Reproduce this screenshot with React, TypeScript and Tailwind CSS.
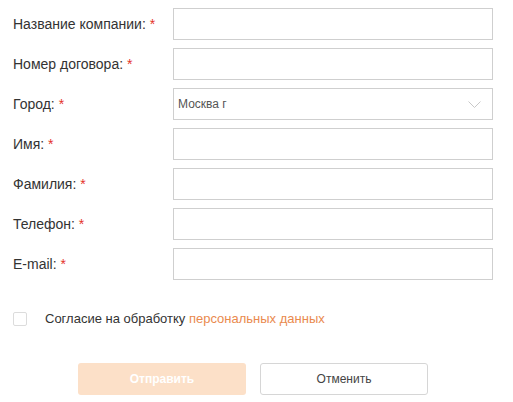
import { useState } from 'react';

const fields = [
  { name: 'company', label: 'Название компании:' },
  { name: 'contract', label: 'Номер договора:' },
  { name: 'city', label: 'Город:', select: true },
  { name: 'firstName', label: 'Имя:' },
  { name: 'lastName', label: 'Фамилия:' },
  { name: 'phone', label: 'Телефон:' },
  { name: 'email', label: 'E-mail:' },
];

export default function App() {
  const [agree, setAgree] = useState(false);

  return (
    <div className="w-[513px] h-[402px] bg-white text-[14px] leading-5 text-[#333] font-['Liberation_Sans',Arial,sans-serif]">
      <form className="pt-2 pl-[13px]" onSubmit={(e) => e.preventDefault()}>
        <div className="flex flex-col gap-2">
          {fields.map((f) => (
            <div key={f.name} className="flex items-center">
              <label className="w-[160px] shrink-0">
                {f.label} <span className="text-[#e4312a]">*</span>
              </label>
              {f.select ? (
                <div className="relative w-[320px] h-8 border border-[#cfcfcf] bg-white flex items-center pl-[4px] text-[12px] text-[#555]">
                  Москва г
                  <svg
                    className="absolute right-[11px] top-[12px]"
                    width="13"
                    height="8"
                    viewBox="0 0 13 8"
                    fill="none"
                    stroke="#c8c8c8"
                    strokeWidth="1"
                  >
                    <path d="M0.5 0.5 L6.5 6.5 L12.5 0.5" />
                  </svg>
                </div>
              ) : (
                <input
                  type="text"
                  name={f.name}
                  className="w-[320px] h-8 border border-[#cfcfcf] bg-white px-1 text-[12px] outline-none"
                />
              )}
            </div>
          ))}
        </div>

        <label className="mt-[29px] flex items-center cursor-pointer text-[13px]">
          <span
            onClick={() => setAgree(!agree)}
            className="w-[14px] h-[14px] border border-[#dcdcdc] rounded-[2px] bg-white shrink-0"
          />
          <span className="ml-[18px]">
            Согласие на обработку{' '}
            <a className="text-[#ea8a4e]">персональных данных</a>
          </span>
        </label>

        <div className="mt-[34px] flex gap-[14px] pl-[65px] text-[12px]">
          <button
            type="submit"
            className="w-[168px] h-8 rounded-[3px] bg-[#fce0c8] text-white font-bold"
          >
            Отправить
          </button>
          <button
            type="button"
            className="w-[168px] h-8 rounded-[3px] border border-[#d6d6d6] bg-white text-[#444]"
          >
            Отменить
          </button>
        </div>
      </form>
    </div>
  );
}
